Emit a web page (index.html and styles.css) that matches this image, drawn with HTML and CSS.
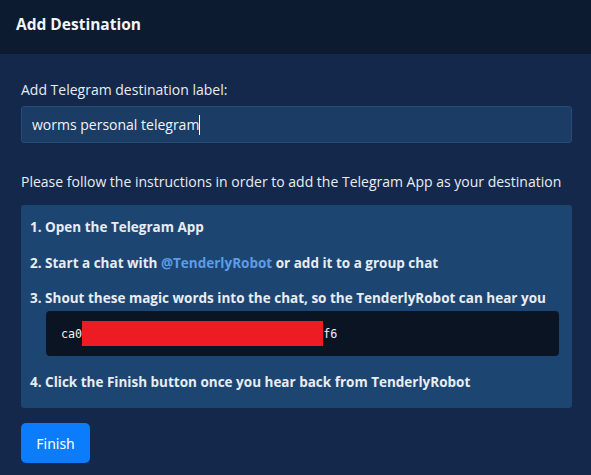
FILE: index.html
```html
<!DOCTYPE html>
<html>
<head>
<meta charset="utf-8">
<link rel="stylesheet" href="styles.css">
</head>
<body>
<header class="header">Add Destination</header>
<main class="content">
  <label class="label" for="dest">Add Telegram destination label:</label>
  <div class="input" id="dest">worms personal telegram<span class="caret"></span></div>
  <p class="intro">Please follow the instructions in order to add the Telegram App as your destination</p>
  <div class="steps">
    <div class="step">1. Open the Telegram App</div>
    <div class="step">2. Start a chat with <span class="link">@TenderlyRobot</span> or add it to a group chat</div>
    <div class="step">3. Shout these magic words into the chat, so the TenderlyRobot can hear you</div>
    <div class="code">ca0<span class="redact"></span>f6</div>
    <div class="step last">4. Click the Finish button once you hear back from TenderlyRobot</div>
  </div>
  <button class="finish">Finish</button>
</main>
</body>
</html>
```
FILE: styles.css
```css
html, body {
  margin: 0;
  padding: 0;
}
body {
  background: #13284a;
  color: #e8edf3;
  font-family: "Open Sans", "Noto Sans", sans-serif;
  font-size: 14px;
  width: 591px;
  height: 475px;
  overflow: hidden;
}
.header {
  height: 54px;
  background: #0d1b31;
  display: flex;
  align-items: center;
  padding: 0 0 7px 16px;
  box-sizing: border-box;
  font-weight: 700;
  font-size: 15.5px;
  color: #f2f5f8;
}
.content {
  padding: 26px 19px 0 21px;
  display: flex;
  flex-direction: column;
  align-items: flex-start;
}
.label {
  line-height: 20px;
  height: 20px;
}
.input {
  margin-top: 6px;
  width: 100%;
  height: 37px;
  box-sizing: border-box;
  background: #1b3c64;
  border: 1px solid #274b77;
  border-radius: 3px;
  padding: 0 10px;
  display: flex;
  align-items: center;
  color: #f1f4f8;
}
.caret {
  display: inline-block;
  width: 1px;
  height: 20px;
  background: #ffffff;
}
.intro {
  margin: 29px 0 0;
  line-height: 20px;
}
.steps {
  margin-top: 13px;
  width: 100%;
  box-sizing: border-box;
  background: #1d4572;
  border-radius: 3px;
  padding: 12px 13px 16px 9px;
  display: flex;
  flex-direction: column;
  font-weight: 700;
  font-size: 13.5px;
}
.step {
  line-height: 20px;
  margin-bottom: 16px;
  white-space: nowrap;
}
.step:nth-child(2) {
  margin-bottom: 15px;
}
.step:nth-child(3) {
  margin-bottom: 3px;
}
.step.last {
  margin-bottom: 0;
}
.link {
  color: #5c9de8;
}
.code {
  margin: 0 0 16px 16px;
  height: 45px;
  background: #0b1422;
  border-radius: 4px;
  display: flex;
  align-items: center;
  padding-left: 15px;
  font-family: "DejaVu Sans Mono", monospace;
  font-size: 11.7px;
  font-weight: 400;
  color: #eef1f4;
}
.redact {
  display: inline-block;
  width: 241px;
  height: 25px;
  background: #ed1c24;
}
.finish {
  margin-top: 15px;
  width: 69px;
  height: 40px;
  background: #0b7cfb;
  color: #ffffff;
  border: none;
  border-radius: 5px;
  font-family: "Noto Sans", sans-serif;
  font-size: 14px;
  padding: 0;
}
```
